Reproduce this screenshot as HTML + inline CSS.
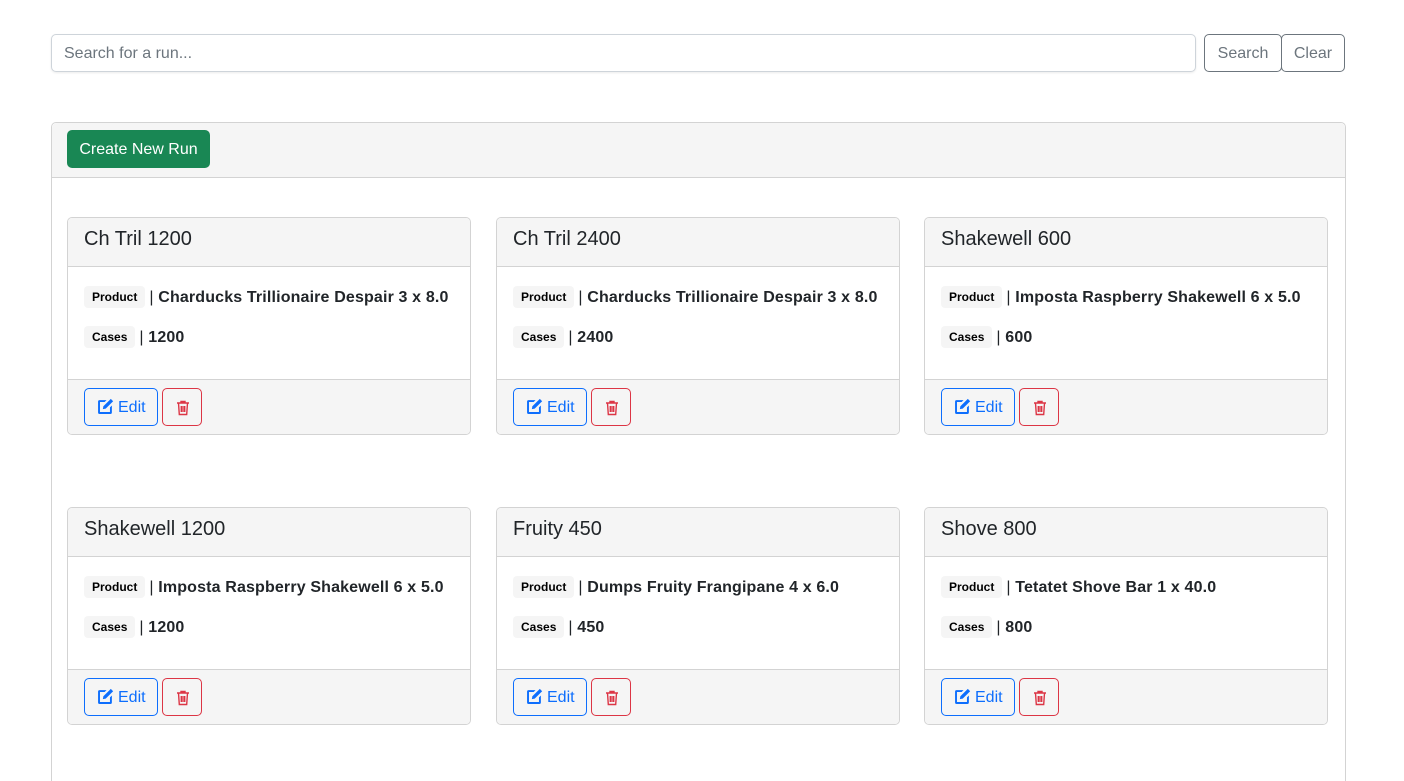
<!DOCTYPE html>
<html><head><style>
*{box-sizing:border-box;margin:0;padding:0}
html,body{width:1404px;height:781px;overflow:hidden}
body{background:#fff;font-family:"Liberation Sans",Helvetica,Arial,sans-serif;color:#212529;position:relative}
.inp{position:absolute;left:51px;top:34px;width:1145px;height:38px;border:1px solid #ced4da;border-radius:5px;font-size:16px;color:#6c757d;padding:10px 12px;box-shadow:0 1px 2px rgba(0,0,0,.08)}
.sb{position:absolute;top:34px;height:38px;border:1px solid #6c757d;border-radius:5px;font-size:16px;color:#6c757d;text-align:center;line-height:38px}
.outer{position:absolute;left:51px;top:122px;width:1295px;height:659px;border:1px solid #d3d3d3;border-bottom:none;border-radius:5px 5px 0 0}
.oh{height:55px;background:#f5f5f5;border-bottom:1px solid #d3d3d3;border-radius:5px 5px 0 0;position:relative}
.create{position:absolute;left:15px;top:7px;width:143px;height:38px;background:#198754;color:#fff;border-radius:5px;font-size:16px;line-height:39px;text-align:center}
.card{position:absolute;width:404px;height:218px;border:1px solid #d3d3d3;border-radius:5px;overflow:hidden}
.ch{height:49px;background:#f5f5f5;border-bottom:1px solid #d3d3d3;font-size:20px;padding:10px 16px;line-height:22px}
.cb{height:112px;padding:0 16px;position:relative}
.row{position:absolute;left:16px;font-weight:bold;font-size:16px;white-space:nowrap;letter-spacing:.15px}
.pp{font-weight:normal}
.bd{display:inline-block;background:#f5f5f5;font-size:12px;padding:4px 8px;border-radius:4px;color:#000;margin-right:4px;vertical-align:1px;letter-spacing:0}
.cf{height:56px;background:#f5f5f5;border-top:1px solid #d3d3d3;position:relative}
.edit{position:absolute;left:16px;top:8px;width:74px;height:38px;border:1px solid #0d6efd;border-radius:5px;color:#0d6efd;font-size:16px;line-height:38px;padding-left:12px}
.edit svg{vertical-align:-3px;margin-right:4px}
.del{position:absolute;left:94px;top:8px;width:40px;height:38px;border:1px solid #dc3545;border-radius:5px}
.del svg{position:absolute;left:13px;top:11px}
</style></head><body>
<div class="inp">Search for a run...</div>
<div class="sb" style="left:1204px;width:78px">Search</div>
<div class="sb" style="left:1281px;width:64px">Clear</div>
<div class="outer"><div class="oh"><div class="create">Create New Run</div></div></div>

<div class="card" style="left:67px;top:217px"><div class="ch">Ch Tril 1200</div><div class="cb"><div class="row" style="top:19px"><span class="bd">Product</span><span class="pp">|</span> Charducks Trillionaire Despair 3 x 8.0</div><div class="row" style="top:59px"><span class="bd">Cases</span><span class="pp">|</span> 1200</div></div><div class="cf"></div></div>
<div class="card" style="left:496px;top:217px"><div class="ch">Ch Tril 2400</div><div class="cb"><div class="row" style="top:19px"><span class="bd">Product</span><span class="pp">|</span> Charducks Trillionaire Despair 3 x 8.0</div><div class="row" style="top:59px"><span class="bd">Cases</span><span class="pp">|</span> 2400</div></div><div class="cf"></div></div>
<div class="card" style="left:924px;top:217px"><div class="ch">Shakewell 600</div><div class="cb"><div class="row" style="top:19px"><span class="bd">Product</span><span class="pp">|</span> Imposta Raspberry Shakewell 6 x 5.0</div><div class="row" style="top:59px"><span class="bd">Cases</span><span class="pp">|</span> 600</div></div><div class="cf"></div></div>
<div class="card" style="left:67px;top:507px"><div class="ch">Shakewell 1200</div><div class="cb"><div class="row" style="top:19px"><span class="bd">Product</span><span class="pp">|</span> Imposta Raspberry Shakewell 6 x 5.0</div><div class="row" style="top:59px"><span class="bd">Cases</span><span class="pp">|</span> 1200</div></div><div class="cf"></div></div>
<div class="card" style="left:496px;top:507px"><div class="ch">Fruity 450</div><div class="cb"><div class="row" style="top:19px"><span class="bd">Product</span><span class="pp">|</span> Dumps Fruity Frangipane 4 x 6.0</div><div class="row" style="top:59px"><span class="bd">Cases</span><span class="pp">|</span> 450</div></div><div class="cf"></div></div>
<div class="card" style="left:924px;top:507px"><div class="ch">Shove 800</div><div class="cb"><div class="row" style="top:19px"><span class="bd">Product</span><span class="pp">|</span> Tetatet Shove Bar 1 x 40.0</div><div class="row" style="top:59px"><span class="bd">Cases</span><span class="pp">|</span> 800</div></div><div class="cf"></div></div>
<script>
var e='<div class="edit"><svg width="17" height="17" viewBox="0 0 16 16"><path d="M1 3.5A1.5 1.5 0 0 1 2.5 2H9L7.2 3.8H2.8v9.4h9.4V8.8L14 7v6.5a1.5 1.5 0 0 1-1.5 1.5h-10A1.5 1.5 0 0 1 1 13.5z" fill="#0d6efd"/><path d="M13 .8l2.2 2.2-7 7L5.5 10.5 6 7.8z" fill="#0d6efd"/></svg>Edit</div>';
var d='<div class="del"><svg width="14" height="16" viewBox="0 0 14 16" fill="none" stroke="#dc3545" stroke-width="1.4"><path d="M1 3h12M5 3V1.5h4V3M2.5 3l.8 11.5h7.4L11.5 3M5.3 6v6M7 6v6M8.7 6v6"/></svg></div>';
document.querySelectorAll('.cf').forEach(function(c){c.innerHTML=e+d;});
</script>
</body></html>
